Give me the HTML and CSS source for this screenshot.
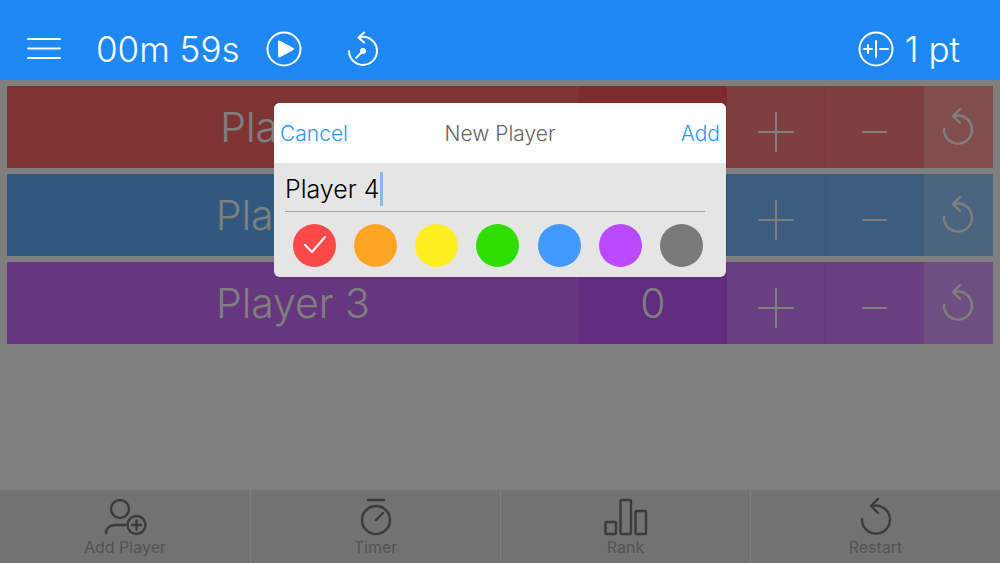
FILE: index.html
```html
<!DOCTYPE html>
<html lang="en">
<head>
    <meta charset="UTF-8">
    <meta name="viewport" content="width=device-width, initial-scale=1.0">
    <title>Score Keeper</title>
    <link rel="stylesheet" href="styles.css">
</head>
<body>
    <!-- Shared icons -->
    <svg class="sprite" aria-hidden="true">
        <symbol id="restart" viewBox="0 0 36 40">
            <path d="M4 22A14 14 0 1 0 14 9.200M20 2l-7 7 7 7"/>
        </symbol>
        <symbol id="plus" viewBox="0 0 36 40"><path d="M1 20h34M18 1v38"/></symbol>
        <symbol id="minus" viewBox="0 0 36 40"><path d="M6 20h23"/></symbol>
    </svg>

    <!-- Header -->
    <header class="header">
        <button class="menu" aria-label="Menu">
            <svg width="34" height="26" viewBox="0 0 34 26"><path d="M1 3h32M1 12.500h32M1 22h32"/></svg>
        </button>
        <span class="time">00m 59s</span>
        <button class="play" aria-label="Start timer">
            <svg width="36" height="36" viewBox="0 0 36 36"><circle cx="18" cy="18" r="16.500"/><path class="solid" d="M13 10.500v15l14-7.500z"/></svg>
        </button>
        <button aria-label="Reset timer">
            <svg width="36" height="36" viewBox="0 0 36 36"><path d="M4 20A14 14 0 1 0 14 6.500M19 1.500l-5.500 5L19 11.500M11 27l7-7"/><circle class="solid" cx="18" cy="20" r="2"/></svg>
        </button>
        <button class="points">
            <svg width="36" height="36" viewBox="0 0 36 36"><circle cx="18" cy="18" r="16.500"/><path d="M6 18h8M10 14v8M18 10v16M22 18h8"/></svg>
            <span>1 pt</span>
        </button>
    </header>

    <!-- Players -->
    <main class="players">
        <div class="player red">
            <span class="name">Player 1</span>
            <span class="score">0</span>
            <button class="step" aria-label="Add point"><svg><use href="#plus"/></svg></button>
            <button class="step" aria-label="Remove point"><svg><use href="#minus"/></svg></button>
            <button class="reset" aria-label="Reset score"><svg><use href="#restart"/></svg></button>
        </div>
        <div class="player blue">
            <span class="name">Player 2</span>
            <span class="score">0</span>
            <button class="step" aria-label="Add point"><svg><use href="#plus"/></svg></button>
            <button class="step" aria-label="Remove point"><svg><use href="#minus"/></svg></button>
            <button class="reset" aria-label="Reset score"><svg><use href="#restart"/></svg></button>
        </div>
        <div class="player purple">
            <span class="name">Player 3</span>
            <span class="score">0</span>
            <button class="step" aria-label="Add point"><svg><use href="#plus"/></svg></button>
            <button class="step" aria-label="Remove point"><svg><use href="#minus"/></svg></button>
            <button class="reset" aria-label="Reset score"><svg><use href="#restart"/></svg></button>
        </div>
    </main>

    <!-- Bottom Bar -->
    <nav class="tabs">
        <button class="tab">
            <svg width="44" height="40" viewBox="0 0 44 40"><circle cx="17" cy="12" r="9"/><path d="M3 36c0-5 4-8 9-8h10M29 28h9M33.500 23.500v9"/><circle cx="33.500" cy="28" r="9"/></svg>
            <span>Add Player</span>
        </button>
        <button class="tab">
            <svg width="44" height="40" viewBox="0 0 44 40"><path d="M14 3h16M22 23l7-7"/><circle cx="22" cy="23" r="14"/></svg>
            <span>Timer</span>
        </button>
        <button class="tab">
            <svg width="44" height="40" viewBox="0 0 44 40"><rect x="1.500" y="25" width="10.500" height="12" rx="1"/><rect x="16.500" y="3" width="10.500" height="34" rx="1"/><rect x="31.500" y="14" width="10.500" height="23" rx="1"/></svg>
            <span>Rank</span>
        </button>
        <button class="tab">
            <svg width="36" height="40"><use href="#restart"/></svg>
            <span>Restart</span>
        </button>
    </nav>

    <!-- New player dialog -->
    <div class="overlay">
        <form class="modal" role="dialog" aria-labelledby="dialogTitle">
            <div class="modal-header">
                <button type="button" class="link">Cancel</button>
                <h2 id="dialogTitle">New Player</h2>
                <button type="button" class="link add">Add</button>
            </div>
            <div class="modal-body">
                <div class="field">
                    <input type="text" class="name-input" value="Player 4" aria-label="Player name">
                    <span class="caret"></span>
                </div>
                <div class="colors">
                    <input type="radio" name="color" class="color c-red" aria-label="Red" checked>
                    <input type="radio" name="color" class="color c-orange" aria-label="Orange">
                    <input type="radio" name="color" class="color c-yellow" aria-label="Yellow">
                    <input type="radio" name="color" class="color c-green" aria-label="Green">
                    <input type="radio" name="color" class="color c-blue" aria-label="Blue">
                    <input type="radio" name="color" class="color c-purple" aria-label="Purple">
                    <input type="radio" name="color" class="color c-gray" aria-label="Gray">
                    <svg class="check" width="24" height="20" viewBox="0 0 24 20"><path d="M2 10l7 7L22 2"/></svg>
                </div>
            </div>
        </form>
    </div>
</body>
</html>
```
FILE: styles.css
```css
* {
    box-sizing: border-box;
}
body {
    font-family: Inter, "Liberation Sans", sans-serif;
    font-weight: 300;
    margin: 0;
    min-height: 100vh;
    display: flex;
    flex-direction: column;
    background: #fff;
}
button {
    font: inherit;
    color: inherit;
    background: none;
    border: none;
    padding: 0;
    cursor: pointer;
}
svg {
    display: block;
    fill: none;
    stroke: currentColor;
    stroke-width: 2;
    stroke-linecap: round;
    stroke-linejoin: round;
}
.sprite {
    position: absolute;
    width: 0;
    height: 0;
}
/* let the buttons set the stroke of the shared icons */
.sprite symbol {
    stroke-width: inherit;
}
.solid {
    fill: currentColor;
}

/* Header */
.header {
    height: 80px;
    padding: 17px 40px 0 27px;
    display: flex;
    align-items: center;
    background: #1e89f5;
    color: #fff;
    font-size: 35px;
}
.time {
    margin: 0 26px 0 35px;
}
.play {
    margin-right: 43px;
}
.points {
    display: flex;
    align-items: center;
    gap: 11px;
    margin-left: auto;
}

/* Players */
.players {
    flex: 1;
    display: flex;
    flex-direction: column;
    gap: 6px;
    padding: 6px 7px;
}
.player {
    display: grid;
    grid-template-columns: 58fr 15fr 10fr 10fr 7fr;
    height: 82px;
    color: #fff;
    font-size: 41px;
    line-height: 82px;
    text-align: center;
}
.player svg {
    width: 36px;
    height: 40px;
    margin: 0 auto;
}
.step {
    padding-top: 10px;
}
.step + .step {
    border-left: 1px solid;
}
.reset svg,
.tab svg {
    stroke-width: 2.4;
}
.red .name { background: #ff6868; }
.red .score { background: #ff565a; }
.red .step { background: #ff7c7e; }
.red .step + .step { border-color: #ff6868; }
.red .reset { background: #ff9c9a; }
.blue .name { background: #62b0ff; }
.blue .score { background: #4e9dff; }
.blue .step { background: #7abaff; }
.blue .step + .step { border-color: #62b0ff; }
.blue .reset { background: #98caff; }
.purple .name { background: #cc6cff; }
.purple .score { background: #c256ff; }
.purple .step { background: #d07eff; }
.purple .step + .step { border-color: #c86cff; }
.purple .reset { background: #dc9eff; }

/* Bottom bar */
.tabs {
    display: grid;
    grid-template-columns: repeat(4, 1fr);
    height: 73px;
    background: #e4e4e4;
}
.tab {
    display: flex;
    flex-direction: column;
    align-items: center;
    padding-top: 7px;
    color: #777;
    font-size: 16px;
    font-weight: 400;
    line-height: 20px;
}
.tab + .tab {
    border-left: 1px solid #fff;
}
.tab span {
    color: #a8a8a8;
}

/* Dialog */
.overlay {
    position: absolute;
    top: 80px;
    right: 0;
    bottom: 0;
    left: 0;
    display: flex;
    justify-content: center;
    align-items: flex-start;
    padding-top: 23px;
    background: rgba(0, 0, 0, 0.5);
}
.modal {
    width: 452px;
    border-radius: 6px;
    overflow: hidden;
    background: #e5e5e5;
}
.modal-header {
    display: grid;
    grid-template-columns: 1fr auto 1fr;
    align-items: center;
    height: 60px;
    padding: 0 6px;
    background: #fff;
    font-size: 21px;
}
.modal-header h2 {
    margin: 0;
    font-size: 21px;
    font-weight: 300;
    color: #666;
}
.link {
    color: #2f98f5;
    text-align: left;
}
.add {
    text-align: right;
}
.modal-body {
    padding: 4px 21px 10px 11px;
}
.field {
    display: flex;
    align-items: center;
    height: 45px;
    border-bottom: 1px solid #a0a0a0;
}
.name-input {
    width: 95px;
    padding: 0;
    border: none;
    outline: none;
    background: none;
    color: #000;
    font: inherit;
    font-size: 25px;
}
.caret {
    width: 3px;
    height: 34px;
    background: #84bcf2;
}
.colors {
    position: relative;
    display: flex;
    justify-content: space-between;
    padding: 12px 2px 0 8px;
}
.color {
    appearance: none;
    width: 43px;
    height: 43px;
    margin: 0;
    border-radius: 50%;
}
.c-red { background: #ff4848; }
.c-orange { background: #ffa423; }
.c-yellow { background: #ffee22; }
.c-green { background: #2fde00; }
.c-blue { background: #4299ff; }
.c-purple { background: #ba49ff; }
.c-gray { background: #797979; }
.check {
    position: absolute;
    top: 23px;
    left: 18px;
    color: #fff;
    pointer-events: none;
}
```
